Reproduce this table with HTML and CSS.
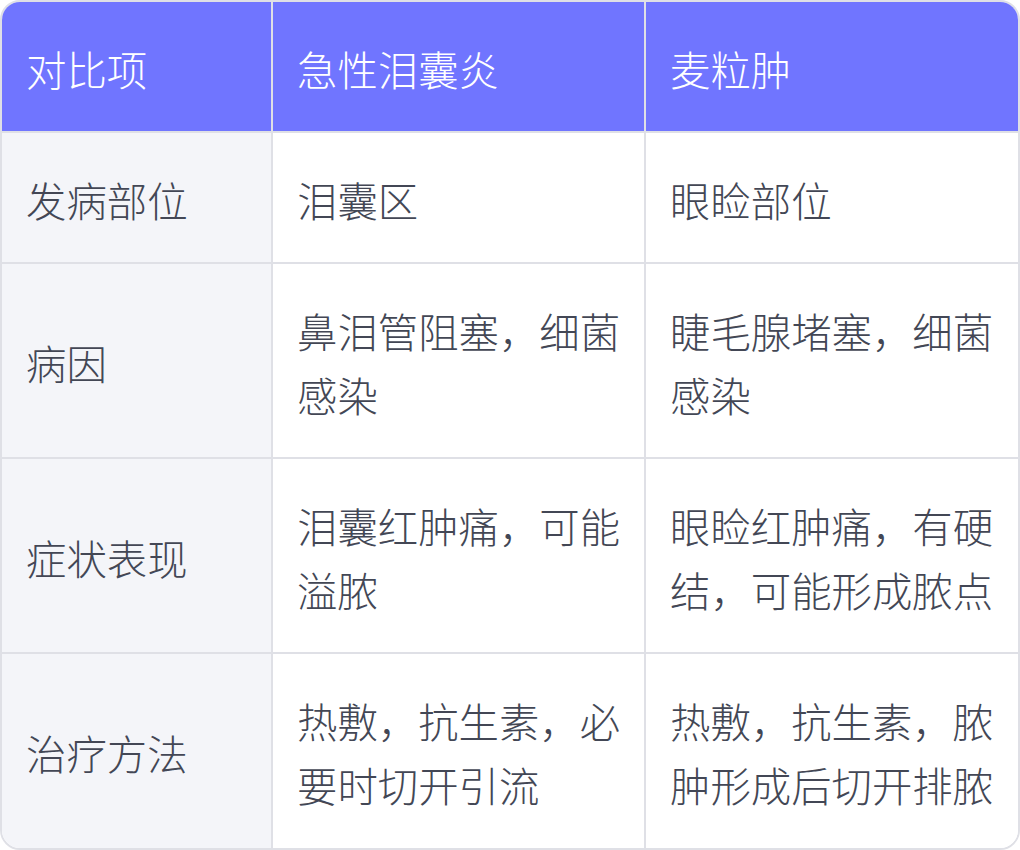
FILE: index.html
```html
<!DOCTYPE html>
<html lang="zh-CN">
<head>
<meta charset="utf-8">
<link rel="stylesheet" href="styles.css">
</head>
<body>
<div class="wrap">
<table class="cmp">
  <colgroup>
    <col class="c1"><col class="c2"><col class="c3">
  </colgroup>
  <thead>
    <tr><th>对比项</th><th>急性泪囊炎</th><th class="last">麦粒肿</th></tr>
  </thead>
  <tbody>
    <tr><td class="key">发病部位</td><td>泪囊区</td><td class="last">眼睑部位</td></tr>
    <tr><td class="key">病因</td><td>鼻泪管阻塞，细菌感染</td><td class="last">睫毛腺堵塞，细菌感染</td></tr>
    <tr><td class="key">症状表现</td><td>泪囊红肿痛，可能溢脓</td><td class="last">眼睑红肿痛，有硬结，可能形成脓点</td></tr>
    <tr class="end"><td class="key">治疗方法</td><td>热敷，抗生素，必要时切开引流</td><td class="last">热敷，抗生素，脓肿形成后切开排脓</td></tr>
  </tbody>
</table>
</div>
</body>
</html>
```
FILE: styles.css
```css
html, body {
  margin: 0;
  padding: 0;
  background: #ffffff;
}
.wrap {
  width: 1020px;
  height: 850px;
  box-sizing: border-box;
  border: 2px solid #dfe0e6;
  border-radius: 20px;
  overflow: hidden;
}
.cmp {
  width: 1016px;
  border-collapse: separate;
  border-spacing: 0;
  table-layout: fixed;
  font-family: "Noto Sans CJK SC", "Noto Sans", sans-serif;
  font-size: 40.4px;
  line-height: 64px;
  color: #434755;
}
.c1 { width: 271px; }
.c2 { width: 373px; }
.c3 { width: 372px; }
th, td {
  text-align: left;
  vertical-align: middle;
  padding: 35px 23px 30px 24px;
  border-right: 2px solid #dfe0e6;
  border-bottom: 2px solid #dfe0e6;
  font-weight: 300;
}
th {
  background: #7075ff;
  color: #ffffff;
}
td { background: #ffffff; }
td.key { background: #f4f5f9; }
.last { border-right: none; }
tr.end td { border-bottom: none; padding-bottom: 31px; }
```
